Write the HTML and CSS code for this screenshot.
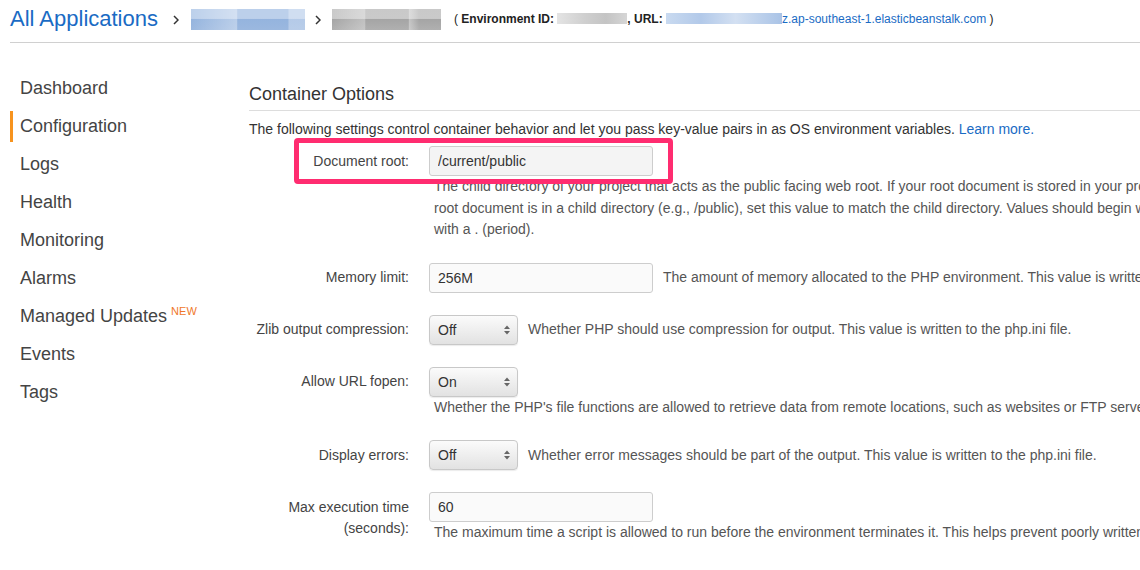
FILE: index.html
```html
<!DOCTYPE html>
<html lang="en">
<head>
<meta charset="utf-8">
<title>Configuration - Container Options</title>
<link rel="stylesheet" href="styles.css">
</head>
<body>
<header class="topbar">
  <a class="crumb-root">All Applications</a>
  <svg class="chev" width="6" height="10" viewBox="0 0 6 10"><polyline points="1,1 5,5 1,9" fill="none" stroke="#333" stroke-width="1.5"/></svg>
  <span class="blur blur-app"></span>
  <svg class="chev" width="6" height="10" viewBox="0 0 6 10"><polyline points="1,1 5,5 1,9" fill="none" stroke="#333" stroke-width="1.5"/></svg>
  <span class="blur blur-env"></span>
  <span class="envinfo">( <b>Environment ID:</b> <span class="blur blur-id"></span><b>, URL:</b> <span class="blur blur-url"></span><a class="url">z.ap-southeast-1.elasticbeanstalk.com</a> )</span>
</header>

<div class="layout">
  <nav class="sidenav">
    <div class="nav-item"><span class="ind"></span>Dashboard</div>
    <div class="nav-item active"><span class="ind"></span>Configuration</div>
    <div class="nav-item"><span class="ind"></span>Logs</div>
    <div class="nav-item"><span class="ind"></span>Health</div>
    <div class="nav-item"><span class="ind"></span>Monitoring</div>
    <div class="nav-item"><span class="ind"></span>Alarms</div>
    <div class="nav-item"><span class="ind"></span>Managed Updates<sup class="new">NEW</sup></div>
    <div class="nav-item"><span class="ind"></span>Events</div>
    <div class="nav-item"><span class="ind"></span>Tags</div>
  </nav>

  <main class="content">
    <h2 class="section-title">Container Options</h2>
    <p class="intro">The following settings control container behavior and let you pass key-value pairs in as OS environment variables. <a class="link">Learn more.</a></p>

    <div class="row highlighted">
      <label class="lbl">Document root:</label>
      <div class="field">
        <div class="ctrl-line"><input class="txt txt-dark" type="text" value="/current/public"></div>
        <div class="help-below">
          <div>The child directory of your project that acts as the public facing web root. If your root document is stored in your project directory, leave this set to "/". If your</div>
          <div>root document is in a child directory (e.g., /public), set this value to match the child directory. Values should begin with a slash character (/), and cannot begin</div>
          <div>with a . (period).</div>
        </div>
      </div>
    </div>

    <div class="row">
      <label class="lbl">Memory limit:</label>
      <div class="field">
        <div class="ctrl-line"><input class="txt" type="text" value="256M"><span class="help-inline">The amount of memory allocated to the PHP environment. This value is written to the php.ini file.</span></div>
      </div>
    </div>

    <div class="row">
      <label class="lbl">Zlib output compression:</label>
      <div class="field">
        <div class="ctrl-line">
          <div class="select"><span>Off</span><svg width="6" height="10" viewBox="0 0 6 10"><polygon points="0,4 3,0.5 6,4" fill="#666"/><polygon points="0,6 3,9.5 6,6" fill="#666"/></svg></div>
          <span class="help-inline">Whether PHP should use compression for output. This value is written to the php.ini file.</span>
        </div>
      </div>
    </div>

    <div class="row">
      <label class="lbl">Allow URL fopen:</label>
      <div class="field">
        <div class="ctrl-line">
          <div class="select"><span>On</span><svg width="6" height="10" viewBox="0 0 6 10"><polygon points="0,4 3,0.5 6,4" fill="#666"/><polygon points="0,6 3,9.5 6,6" fill="#666"/></svg></div>
        </div>
        <div class="help-below"><div>Whether the PHP's file functions are allowed to retrieve data from remote locations, such as websites or FTP servers. This value is written to the php.ini file.</div></div>
      </div>
    </div>

    <div class="row">
      <label class="lbl">Display errors:</label>
      <div class="field">
        <div class="ctrl-line">
          <div class="select"><span>Off</span><svg width="6" height="10" viewBox="0 0 6 10"><polygon points="0,4 3,0.5 6,4" fill="#666"/><polygon points="0,6 3,9.5 6,6" fill="#666"/></svg></div>
          <span class="help-inline">Whether error messages should be part of the output. This value is written to the php.ini file.</span>
        </div>
      </div>
    </div>

    <div class="row">
      <label class="lbl">Max execution time<br>(seconds):</label>
      <div class="field">
        <div class="ctrl-line"><input class="txt" type="text" value="60"></div>
        <div class="help-below"><div>The maximum time a script is allowed to run before the environment terminates it. This helps prevent poorly written scripts from tying up the server.</div></div>
      </div>
    </div>
  </main>
</div>
</body>
</html>
```

FILE: styles.css
```css
html, body {
  margin: 0;
  padding: 0;
  background: #fff;
  overflow: hidden;
}

body {
  width: 1140px;
  height: 570px;
  font-family: "Liberation Sans", Arial, Helvetica, sans-serif;
  color: #333;
}

/* ---------- top breadcrumb bar ---------- */
.topbar {
  display: flex;
  align-items: center;
  height: 43px;
  box-sizing: border-box;
  margin-left: 10px;
  padding-bottom: 4px;
  border-bottom: 1px solid #d0d0d0;
  white-space: nowrap;
}

.crumb-root {
  font-size: 22px;
  line-height: 26px;
  color: #1a6bc4;
}

.chev {
  display: block;
  margin-top: 1px;
}

.crumb-root + .chev {
  margin-left: 15px;
}

.blur {
  display: inline-block;
}

.blur-app {
  width: 114px;
  height: 21px;
  margin-left: 12px;
  margin-right: 10px;
  background:
    linear-gradient(to right, rgba(255,255,255,0) 0, rgba(255,255,255,0.35) 40%, rgba(255,255,255,0) 41%, rgba(255,255,255,0) 85%, rgba(255,255,255,0.3) 86%),
    linear-gradient(to bottom, #bcd0eb 0, #bcd0eb 45%, #95b4de 50%, #9bb8df 100%);
}

.blur-env {
  width: 109px;
  height: 21px;
  margin-left: 11px;
  margin-right: 13px;
  background:
    linear-gradient(to right, rgba(255,255,255,0) 0, rgba(255,255,255,0.3) 30%, rgba(255,255,255,0) 31%, rgba(255,255,255,0) 70%, rgba(255,255,255,0.35) 71%, rgba(255,255,255,0) 80%),
    linear-gradient(to bottom, #c9c9c9 0, #cacaca 45%, #a5a5a5 50%, #b0b0b0 100%);
}

.envinfo {
  display: block;
  font-size: 12px;
  line-height: 16px;
  color: #222;
  white-space: pre;
}

.envinfo b {
  font-weight: bold;
}

.blur-id {
  width: 70px;
  height: 11px;
  vertical-align: -1px;
  background: linear-gradient(to right, #e4e4e4, #cfcfcf 40%, #c4c4c4 70%, #d6d6d6);
}

.blur-url {
  width: 116px;
  height: 11px;
  vertical-align: -1px;
  background: linear-gradient(to right, #c9daf0, #b2c9e9 30%, #d3e0f2 60%, #a9c3e6);
}

.url {
  color: #1a6bc4;
}

/* ---------- page layout ---------- */
.layout {
  display: flex;
}

.sidenav {
  flex: 0 0 249px;
  padding-top: 26px;
}

.nav-item {
  display: flex;
  align-items: center;
  height: 38px;
  margin-left: 10px;
  font-size: 18px;
  color: #444;
  white-space: nowrap;
}

.nav-item .ind {
  width: 3px;
  height: 31px;
  margin-right: 7px;
  flex: 0 0 3px;
}

.nav-item.active .ind {
  background: #f7931e;
}

.new {
  align-self: flex-start;
  margin-top: 8px;
  margin-left: 4px;
  font-size: 11px;
  line-height: 12px;
  color: #f0782a;
}

/* ---------- main content ---------- */
.content {
  flex: 0 0 1000px;
  padding-top: 39px;
}

.section-title {
  margin: 0;
  font-size: 18px;
  line-height: 24px;
  font-weight: normal;
  color: #333;
  padding-bottom: 4px;
  border-bottom: 1px solid #ddd;
}

.intro {
  margin: 8px 0 0 0;
  font-size: 14px;
  line-height: 20px;
  color: #333;
  white-space: nowrap;
}

.link {
  color: #1a6bc4;
}

.row {
  display: grid;
  grid-template-columns: 160px 1fr;
  column-gap: 20px;
  margin-top: 22px;
  font-size: 14px;
}

.row.highlighted {
  position: relative;
  margin-top: 7px;
}

.row.highlighted::after {
  content: "";
  position: absolute;
  left: 45px;
  top: -8px;
  width: 379px;
  height: 46px;
  box-sizing: border-box;
  border: 5.5px solid #ff2c70;
  border-radius: 4px;
  pointer-events: none;
}

.lbl {
  text-align: right;
  padding-top: 4.5px;
  line-height: 21px;
  color: #444;
  white-space: nowrap;
}

.field {
  min-width: 0;
}

.ctrl-line {
  display: flex;
  align-items: center;
  gap: 10px;
  height: 30px;
}

.txt {
  width: 224px;
  height: 30px;
  box-sizing: border-box;
  margin: 0;
  padding: 0 8px;
  border: 1px solid #cdcdcd;
  border-radius: 3px;
  background: #fafafa;
  font-family: "Liberation Sans", Arial, Helvetica, sans-serif;
  font-size: 14px;
  color: #333;
  flex: 0 0 224px;
}

.txt-dark {
  background: #f4f4f4;
}

.select {
  display: flex;
  align-items: center;
  justify-content: space-between;
  width: 89px;
  height: 30px;
  box-sizing: border-box;
  padding: 0 7px 0 8px;
  border: 1px solid #c8c8c8;
  border-radius: 4px;
  background: linear-gradient(to bottom, #fbfbfb 0%, #ececec 60%, #e2e2e2 100%);
  box-shadow: 0 1px 1px rgba(0,0,0,0.08);
  color: #333;
  flex: 0 0 89px;
}

.select svg {
  display: block;
}

.help-inline {
  line-height: 21px;
  color: #555;
  white-space: nowrap;
}

.help-below {
  padding-left: 5px;
  line-height: 21.5px;
  color: #555;
  white-space: nowrap;
}
```
